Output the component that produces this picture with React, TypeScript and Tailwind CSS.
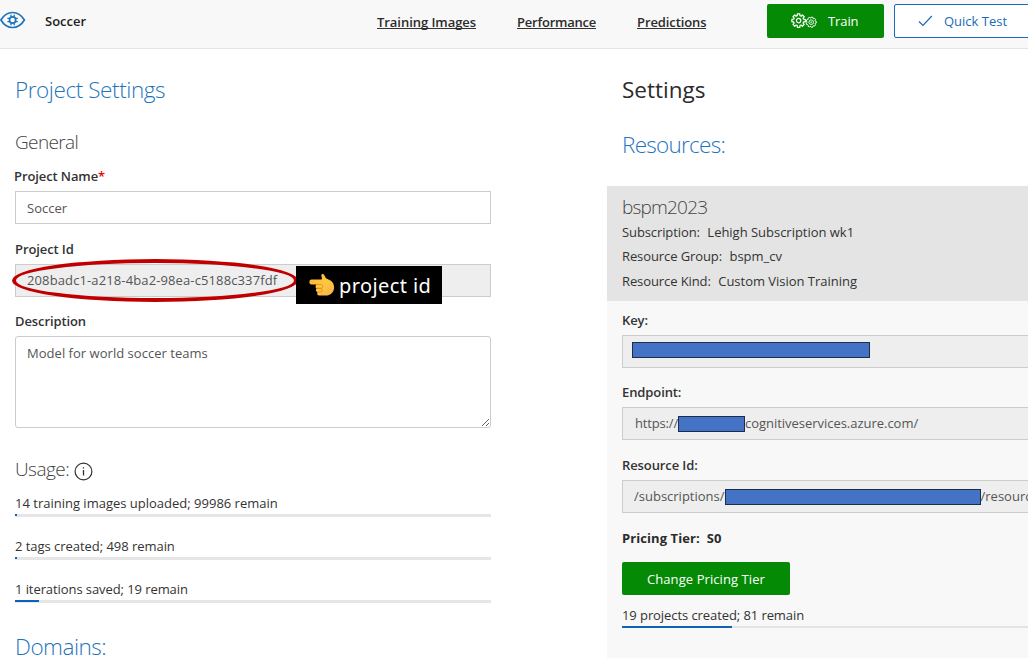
import type { ReactNode } from "react";

function gearPath(cx: number, cy: number, outer: number, inner: number, teeth: number) {
  const step = (Math.PI * 2) / teeth;
  const points: string[] = [];
  for (let i = 0; i < teeth; i++) {
    const a = i * step;
    const corners: [number, number][] = [
      [-0.34, inner],
      [-0.24, outer],
      [0.24, outer],
      [0.34, inner],
    ];
    for (const [offset, r] of corners) {
      const t = a + offset * step;
      points.push(`${(cx + r * Math.cos(t)).toFixed(2)} ${(cy + r * Math.sin(t)).toFixed(2)}`);
    }
  }
  return `M${points.join("L")}Z`;
}

function EyeIcon() {
  return (
    <svg width="26" height="18" viewBox="0 0 26 18" fill="none" stroke="#1b72bd">
      <path d="M0.900 9C4 3.800 8 1.500 12.600 1.500S21.200 3.800 24.400 9C21.200 14.200 17.200 16.500 12.600 16.500S4 14.200 0.900 9Z" strokeWidth="1.7" strokeLinejoin="round" />
      <circle cx="12.6" cy="9" r="3.1" strokeWidth="1.7" />
      <path d="M11 3.800v2M14.200 3.800v2M11 12.200v2M14.200 12.200v2M7.400 7.400h2M7.400 10.600h2M15.800 7.400h2M15.800 10.600h2" strokeWidth="1.3" />
    </svg>
  );
}

function GearsIcon() {
  return (
    <svg width="27" height="16" viewBox="0 0 27 16" fill="none" stroke="#fff" strokeLinejoin="round">
      <path d={gearPath(7.6, 7.6, 6.8, 5.1, 8)} strokeWidth="1.25" />
      <circle cx="7.6" cy="7.6" r="2.2" strokeWidth="1.2" />
      <path d={gearPath(20.2, 9.2, 5.1, 4.3, 9)} strokeWidth="1" />
      <circle cx="20.2" cy="9.2" r="2.3" strokeWidth="0.9" />
      <circle cx="20.2" cy="9.2" r="0.5" strokeWidth="0.8" />
    </svg>
  );
}

function PointingHand() {
  return (
    <svg width="26" height="24" viewBox="0 0 26 24">
      <defs>
        <linearGradient id="skin" x1="0" y1="0" x2="1" y2="1">
          <stop offset="0" stopColor="#ffb02e" />
          <stop offset="0.5" stopColor="#ffc83d" />
          <stop offset="1" stopColor="#f9b04a" />
        </linearGradient>
      </defs>
      <path
        d="M2.4 6.6h9c1.2 0 1.7-.5 1.5-1.5l-.5-2.2C12 1.200 13.300 .600 14.400 1.200c1 .6 1.500 2.200 2.200 3.300 .6 1 1.600 1.500 2.900 1.900 3.700 1.200 5.600 4 5.600 7.900 0 5-3.500 8.300-8.600 8.300h-5.600c-1.700 0-2.700-.9-2.700-2.200 0-.5.2-.9.4-1.200-1.100-.3-1.700-1-1.700-2.100 0-.7.3-1.300.8-1.700-.8-.4-1.200-1.100-1.200-2 0-.8.4-1.500 1-2H2.400C1 11.400.4 10.200.4 9s.7-2.400 2-2.400Z"
        fill="url(#skin)"
      />
      <path d="M7.500 11.400h4.800c1.900 0 1.900 3.600 0 3.900H7.900M7.800 15.400h4.300c1.500.2 1.500 3.300 0 3.600H8.800" fill="none" stroke="#e88a26" strokeWidth="0.9" />
    </svg>
  );
}

function InfoIcon() {
  return (
    <svg width="19" height="19" viewBox="0 0 19 19" fill="none" stroke="#333">
      <circle cx="9.500" cy="9.500" r="8.400" strokeWidth="1.200" />
      <path d="M9.500 8v5.500M9.500 5.200v1.400" strokeWidth="1.300" />
    </svg>
  );
}

function Label({ children, className = "" }: { children: ReactNode; className?: string }) {
  return <div className={`h-5 leading-5 font-semibold tracking-[-0.1px] text-[#333] ${className}`}>{children}</div>;
}

function Usage({ children, fill, className = "" }: { children: ReactNode; fill: number; className?: string }) {
  return (
    <div className={className}>
      <div className="h-5 leading-[19px]">{children}</div>
      <div className="h-[3px] bg-[#e6e6e6]">
        <div className="h-[2px] bg-[#0f62b5]" style={{ width: fill }} />
      </div>
    </div>
  );
}

const readOnlyField = "-mr-5 flex h-[33px] items-center border border-[#ccc] bg-[#eee] text-[#555]";
const redacted = "h-4 shrink-0 border border-[#1b2c4d] bg-[#4472c4]";

function Header() {
  return (
    <header className="flex h-[49px] shrink-0 items-start border-b border-[#e4e4e4] bg-[#f8f8f8]">
      <div className="flex w-[377px] shrink-0 items-start">
        <div className="mt-[11px] w-[45px]">
          <EyeIcon />
        </div>
        <span className="mt-[11px] leading-5 font-semibold text-[#222]">Soccer</span>
      </div>
      <nav className="mt-3 flex w-[390px] shrink-0 leading-[21px] font-semibold text-[#2b2b2b]">
        <a className="w-[140px] tracking-[-0.05px]"><span className="inline-block h-[17px] border-b border-[#333]">Training Images</span></a>
        <a className="w-[120px] tracking-[-0.22px]"><span className="inline-block h-[17px] border-b border-[#333]">Performance</span></a>
        <a className="tracking-[-0.1px]"><span className="inline-block h-[17px] border-b border-[#333]">Predictions</span></a>
      </nav>
      <button className="mt-1 flex h-[34px] w-[117px] shrink-0 items-center rounded-[2px] bg-[#058a05] pl-6 text-white">
        <GearsIcon />
        <span className="mt-px ml-[10px] tracking-[-0.1px]">Train</span>
      </button>
      <button className="mt-1 ml-[10px] flex h-[34px] w-[160px] shrink-0 items-center rounded-[2px] border border-[#1b6ab5] bg-white pl-[23px] text-[#1b6ab5]">
        <svg width="15" height="12" viewBox="0 0 15 12" fill="none" stroke="currentColor" strokeWidth="1.200">
          <path d="M1 6.500l4 4L13.800 1" />
        </svg>
        <span className="mt-[2px] ml-[11px]">Quick Test</span>
      </button>
    </header>
  );
}

function ProjectSettings() {
  return (
    <section className="ml-[15px] w-[476px] shrink-0">
      <h1 className="mt-[25px] h-8 text-[22.5px] leading-8 font-light tracking-[-0.42px] text-[#1f74bb]">Project Settings</h1>
      <h2 className="mt-[23px] h-[26px] text-[19px] leading-[26px] font-light tracking-[-0.65px] text-[#444]">General</h2>
      <Label className="mt-[11px] -ml-px">
        Project Name<span className="text-[#f00000]">*</span>
      </Label>
      <div className="mt-[5px] flex h-[33px] items-center border border-[#ccc] bg-white pt-[3px] pl-[11px] text-[#555]">Soccer</div>
      <Label className="mt-[15px]">Project Id</Label>
      <div className="relative mt-[5px] flex h-[33px] items-center border border-[#ccc] bg-[#eee] pt-px pl-[11px] tracking-[0.12px] text-[#555]">
        208badc1-a218-4ba2-98ea-c5188c337fdf
        <div className="absolute top-[-6px] left-[-4px] h-[43px] w-[286px] rounded-[50%] border-4 border-[#c00000]" />
        <div className="absolute top-px left-[280px] flex h-[38px] w-[146px] items-center bg-black pl-[13px] text-white">
          <PointingHand />
          <span className="mt-[2px] ml-1 font-['Noto_Sans'] text-[20px] leading-[26px] tracking-[0.4px]">project id</span>
        </div>
      </div>
      <Label className="mt-[14px]">Description</Label>
      <textarea
        className="mt-[5px] block h-[92px] w-full rounded-[3px] border border-[#ccc] bg-white px-[11px] py-[6px] leading-5 tracking-[0.03px] text-[#555] outline-none"
        defaultValue="Model for world soccer teams"
      />
      <h2 className="mt-7 flex h-[26px] items-center text-[19px] leading-[26px] font-light tracking-[-0.55px] text-[#444]">
        Usage:
        <span className="mt-[4px] ml-[5px]">
          <InfoIcon />
        </span>
      </h2>
      <Usage className="mt-3" fill={2}>14 training images uploaded; 99986 remain</Usage>
      <Usage className="mt-5 tracking-[-0.04px]" fill={2}>2 tags created; 498 remain</Usage>
      <Usage className="mt-5 tracking-[-0.08px]" fill={24}>1 iterations saved; 19 remain</Usage>
      <h1 className="mt-[28px] h-8 text-[22.5px] leading-8 font-light tracking-[-0.5px] text-[#1f74bb]">Domains:</h1>
    </section>
  );
}

function Detail({ name, value }: { name: string; value: string }) {
  return (
    <div className="flex h-[24.500px] items-center tracking-[-0.1px]">
      <span>{name}</span>
      <span className="ml-[7.500px] tracking-[-0.02px]">{value}</span>
    </div>
  );
}

function ResourceSettings() {
  return (
    <section className="ml-[116px] flex min-w-0 flex-1 flex-col overflow-hidden">
      <div className="h-[137px] pl-[15px]">
        <h1 className="mt-[25px] h-8 text-[22.5px] leading-8 text-[#2b2b2b]">Settings</h1>
        <h1 className="mt-[23px] h-8 text-[22.5px] leading-8 font-light tracking-[-0.72px] text-[#1f74bb]">Resources:</h1>
      </div>
      <div className="h-[115px] bg-[#e4e4e4] pt-2 pl-[15px]">
        <h2 className="h-[26px] text-[19px] leading-[26px] font-light tracking-[-0.8px] text-[#444]">bspm2023</h2>
        <Detail name="Subscription:" value="Lehigh Subscription wk1" />
        <Detail name="Resource Group:" value="bspm_cv" />
        <Detail name="Resource Kind:" value="Custom Vision Training" />
      </div>
      <div className="h-[357px] bg-[#f8f8f8] pt-[9px] pl-[15px] whitespace-nowrap">
        <Label>Key:</Label>
        <div className={`${readOnlyField} mt-[5px] pl-[9px]`}>
          <div className={`${redacted} mb-[3px] w-[238px]`} />
        </div>
        <Label className="mt-[14px]">Endpoint:</Label>
        <div className={`${readOnlyField} mt-[5px] pl-[12px]`}>
          <span className="mt-px w-[43px] tracking-[-0.16px]">https://</span>
          <div className={`${redacted} w-[67px]`} />
          <span className="mt-px tracking-[-0.03px]">cognitiveservices.azure.com/</span>
        </div>
        <Label className="mt-[15px]">Resource Id:</Label>
        <div className={`${readOnlyField} mt-[5px] pl-[11px]`}>
          <span className="mt-px w-[91px]">/subscriptions/</span>
          <div className={`${redacted} mt-px w-[256px]`} />
          <span className="mt-px">/resourceGroups</span>
        </div>
        <div className="mt-[15px] flex h-5 gap-[7px] leading-5 font-bold tracking-[0.08px] text-[#2b2b2b]">
          <span>Pricing Tier:</span>
          <span>S0</span>
        </div>
        <button className="mt-[14px] flex h-[33px] w-[168px] items-center justify-center rounded-[2px] bg-[#058a05] pt-[2px] tracking-[0.08px] text-white">
          Change Pricing Tier
        </button>
        <div className="mt-[10px] h-[21px] leading-5 tracking-[-0.08px]">19 projects created; 81 remain</div>
        <div className="h-[2px] bg-[#e4e4e4]">
          <div className="h-[2px] w-[110px] bg-[#0f62b5]" />
        </div>
      </div>
    </section>
  );
}

export default function App() {
  return (
    <div className="flex h-[664px] w-[1028px] flex-col overflow-hidden bg-white font-['Open_Sans','Noto_Sans',sans-serif] text-[13px] text-[#333]">
      <Header />
      <main className="flex min-h-0 flex-1">
        <ProjectSettings />
        <ResourceSettings />
      </main>
    </div>
  );
}
